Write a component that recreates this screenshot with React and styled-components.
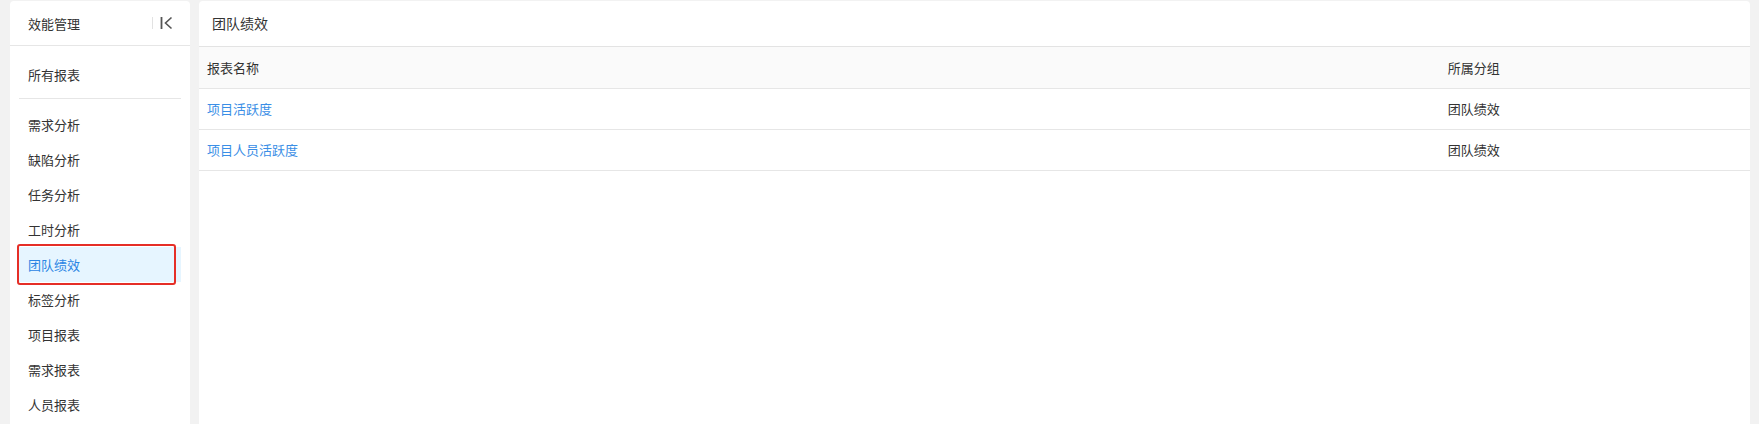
import styled, { createGlobalStyle } from 'styled-components';

const GlobalStyle = createGlobalStyle`
  html, body {
    margin: 0;
    padding: 0;
    background: #f2f2f2;
    font-family: "Noto Sans CJK SC", "Noto Sans", sans-serif;
    color: #333;
  }
  * { box-sizing: border-box; }
`;

const menuTop = ['所有报表'];
const menuItems = [
  '需求分析',
  '缺陷分析',
  '任务分析',
  '工时分析',
  '团队绩效',
  '标签分析',
  '项目报表',
  '需求报表',
  '人员报表',
];
const reports = [
  { name: '项目活跃度', group: '团队绩效' },
  { name: '项目人员活跃度', group: '团队绩效' },
];

const App = () => {
  const active = '团队绩效';
  return (
    <>
      <GlobalStyle />
      <Page>
        <Sidebar>
          <SideHeader>
            <SideTitle>效能管理</SideTitle>
            <CollapseWrap>
              <Separator />
              <svg width="13" height="14" viewBox="0 0 13 14" fill="none">
                <line x1="1.5" y1="1" x2="1.5" y2="13" stroke="#555" strokeWidth="1.8" />
                <polyline points="11.5,1.5 5.5,7 11.5,12.5" stroke="#555" strokeWidth="1.6" />
              </svg>
            </CollapseWrap>
          </SideHeader>
          <MenuList $first>
            {menuTop.map(m => (
              <MenuItem key={m}>{m}</MenuItem>
            ))}
          </MenuList>
          <MenuDivider />
          <MenuList>
            {menuItems.map(m => (
              <MenuItem key={m} $active={m === active}>
                {m}
                {m === active && <Highlight />}
              </MenuItem>
            ))}
          </MenuList>
        </Sidebar>
        <Main>
          <MainHeader>团队绩效</MainHeader>
          <Table>
            <thead>
              <tr>
                <Th $w="80%">报表名称</Th>
                <Th>所属分组</Th>
              </tr>
            </thead>
            <tbody>
              {reports.map(r => (
                <tr key={r.name}>
                  <Td>
                    <Link>{r.name}</Link>
                  </Td>
                  <Td>{r.group}</Td>
                </tr>
              ))}
            </tbody>
          </Table>
        </Main>
      </Page>
    </>
  );
};

const Page = styled.div`
  display: flex;
  gap: 9px;
  padding: 1px 9px 0 10px;
  height: 424px;
  overflow: hidden;
`;
const Sidebar = styled.div`
  width: 180px;
  flex-shrink: 0;
  background: #fff;
  border-radius: 4px 4px 0 0;
  height: 460px;
`;
const SideHeader = styled.div`
  display: flex;
  align-items: center;
  justify-content: space-between;
  height: 45px;
  padding: 0 17px 0 18px;
  border-bottom: 1px solid #e6e6e6;
`;
const SideTitle = styled.div`
  font-size: 13px;
  color: #333;
`;
const CollapseWrap = styled.div`
  display: flex;
  align-items: center;
  gap: 7px;
  svg {
    display: block;
  }
`;
const Separator = styled.span`
  width: 1px;
  height: 12px;
  background: #e2e2e2;
`;
const MenuList = styled.div`
  display: flex;
  flex-direction: column;
  padding-top: ${p => (p.$first ? '11px' : '8px')};
`;
const MenuItem = styled.div`
  position: relative;
  height: 35px;
  line-height: 35px;
  margin: 0 9px;
  padding-left: 9px;
  font-size: 13px;
  color: ${p => (p.$active ? '#2b85e4' : '#333')};
  background: ${p => (p.$active ? '#e6f5ff' : 'transparent')};
`;
const Highlight = styled.span`
  position: absolute;
  top: -3px;
  left: -2px;
  width: 159px;
  height: 41px;
  border: 2px solid #e52e27;
  border-radius: 3px;
  pointer-events: none;
`;
const MenuDivider = styled.div`
  height: 1px;
  margin: 6px 9px 0;
  background: #e6e6e6;
`;
const Main = styled.div`
  flex: 1;
  background: #fff;
  border-radius: 4px 4px 0 0;
  height: 460px;
`;
const MainHeader = styled.div`
  height: 46px;
  line-height: 45px;
  padding-left: 13px;
  font-size: 14px;
  color: #333;
  border-bottom: 1px solid #e3e3e3;
`;
const Table = styled.table`
  width: 100%;
  border-collapse: collapse;
  table-layout: fixed;
`;
const Th = styled.th`
  width: ${p => p.$w || 'auto'};
  height: 41px;
  padding: 0 8px;
  text-align: left;
  font-weight: normal;
  font-size: 13px;
  color: #333;
  background: #fafafa;
  border-bottom: 1px solid #e6e6e6;
`;
const Td = styled.td`
  height: 41px;
  padding: 0 8px;
  font-size: 13px;
  color: #333;
  border-bottom: 1px solid #e6e6e6;
`;
const Link = styled.span`
  color: #3a8ee6;
  cursor: pointer;
`;

export default App;
